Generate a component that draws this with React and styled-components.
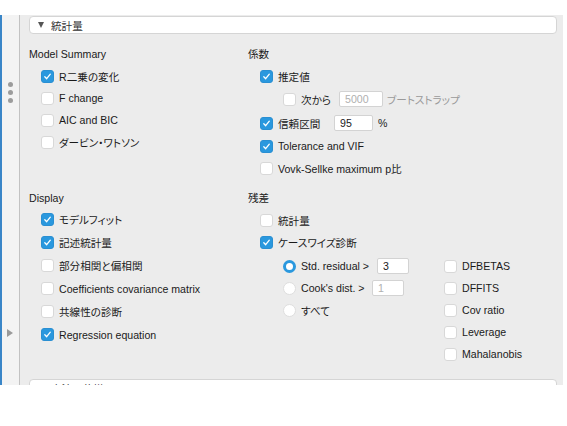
import React from "react";
import styled, { createGlobalStyle } from "styled-components";

const Global = createGlobalStyle`
  html, body { margin: 0; padding: 0; background: #ffffff; }
  body {
    font-family: "Liberation Sans", "Noto Sans CJK JP", sans-serif;
    font-size: 10.6px;
    color: #1a1a1a;
    font-feature-settings: "palt";
  }
  * { box-sizing: border-box; }
`;

const Frame = styled.div`
  display: flex;
  margin-top: 15px;
  width: 563px;
  height: 370px;
  overflow: hidden;
`;

const SideStrip = styled.div`
  width: 20px;
  flex: none;
  display: flex;
  flex-direction: column;
  align-items: center;
  padding-top: 67px;
  background: #f3f3f3;
  border-left: 2px solid #3a86c8;
  border-right: 1px solid #c2c2c2;
`;

const Dots = styled.div`
  display: flex;
  flex-direction: column;
  gap: 3px;
`;

const Dot = styled.span`
  width: 5px;
  height: 5px;
  border-radius: 50%;
  background: #9c9c9c;
`;

const SideArrow = styled.span`
  align-self: flex-start;
  margin-left: 5px;
  margin-top: 226px;
  width: 0;
  height: 0;
  border-top: 4px solid transparent;
  border-bottom: 4px solid transparent;
  border-left: 6px solid #9a9a9a;
`;

const Panel = styled.div`
  flex: 1;
  display: flex;
  flex-direction: column;
  background: #ececec;
  padding: 1px 6px 0 9px;
`;

const SectionHeader = styled.div`
  flex: none;
  height: 18px;
  display: flex;
  align-items: center;
  gap: 7px;
  padding-left: 8px;
  background: #ffffff;
  border: 1px solid #d5d5d5;
  border-radius: 4px;
  color: #333;
  margin-top: ${(p) => p.$top || 0}px;
`;

const Caret = styled.span`
  width: 0;
  height: 0;
  ${(p) =>
    p.$open
      ? `border-left: 3.5px solid transparent;
         border-right: 3.5px solid transparent;
         border-top: 6px solid #555;`
      : `border-top: 3.5px solid transparent;
         border-bottom: 3.5px solid transparent;
         border-left: 6px solid #555;`}
`;

const Columns = styled.div`
  display: grid;
  grid-template-columns: 219px 1fr;
  row-gap: 11px;
  margin-top: 12px;
`;

const Group = styled.section`
  display: flex;
  flex-direction: column;
`;

const Heading = styled.div`
  height: 16px;
  line-height: 16px;
  color: #1a1a1a;
`;

const List = styled.div`
  display: flex;
  flex-direction: column;
  padding-left: 12px;
  padding-top: ${(p) => p.$top ?? 3}px;
`;

const Row = styled.div`
  display: flex;
  align-items: center;
  height: ${(p) => p.$h || 22}px;
  padding-left: ${(p) => p.$indent || 0}px;
  white-space: nowrap;
`;

const Box = styled.span`
  flex: none;
  width: 13px;
  height: 13px;
  border-radius: 3px;
  display: inline-flex;
  align-items: center;
  justify-content: center;
  background: ${(p) => (p.$checked ? "#2a98de" : "#ffffff")};
  border: 1px solid ${(p) => (p.$checked ? "#2a8fd2" : "#d8d8d8")};
`;

const RadioDot = styled.span`
  flex: none;
  width: 13px;
  height: 13px;
  border-radius: 50%;
  background: #ffffff;
  border: ${(p) => (p.$checked ? "3px solid #2a98de" : "1px solid #dedede")};
`;

const Label = styled.span`
  margin-left: 5px;
  color: ${(p) => (p.$muted ? "#9a9a9a" : "#1a1a1a")};
  ${(p) => (p.$w ? `width: ${p.$w}px; flex: none;` : "")}
`;

const NumField = styled.input`
  flex: none;
  width: ${(p) => p.$w}px;
  height: 16px;
  padding: 0 0 0 5px;
  border: 1px solid #d3d3d3;
  border-radius: 2px;
  background: #ffffff;
  font: inherit;
  color: ${(p) => (p.disabled ? "#b0b0b0" : "#1a1a1a")};
  outline: none;
`;

const Suffix = styled.span`
  margin-left: ${(p) => p.$gap || 4}px;
  color: ${(p) => (p.$muted ? "#9a9a9a" : "#1a1a1a")};
`;

const SubGrid = styled.div`
  display: grid;
  grid-template-columns: 161px auto;
  align-items: start;
  margin-left: 23px;
  margin-top: 2px;
`;

const SubCol = styled.div`
  display: flex;
  flex-direction: column;
`;

function Check({ checked }) {
  return (
    <Box $checked={checked}>
      {checked && (
        <svg width="9" height="9" viewBox="0 0 9 9">
          <path
            d="M1.8 4.8 L3.7 6.7 L7.3 2.2"
            fill="none"
            stroke="#ffffff"
            strokeWidth="1.3"
            strokeLinecap="round"
            strokeLinejoin="round"
          />
        </svg>
      )}
    </Box>
  );
}

function CheckRow({ checked, children, h, indent }) {
  return (
    <Row $h={h} $indent={indent}>
      <Check checked={checked} />
      <Label>{children}</Label>
    </Row>
  );
}

export default function App() {
  return (
    <>
      <Global />
      <Frame>
        <SideStrip>
          <Dots>
            <Dot />
            <Dot />
            <Dot />
          </Dots>
          <SideArrow />
        </SideStrip>
        <Panel>
          <SectionHeader>
            <Caret $open />
            <span>統計量</span>
          </SectionHeader>
          <Columns>
            <Group>
              <Heading>Model Summary</Heading>
              <List>
                <CheckRow checked>R二乗の変化</CheckRow>
                <CheckRow>F change</CheckRow>
                <CheckRow>AIC and BIC</CheckRow>
                <CheckRow>ダービン・ワトソン</CheckRow>
              </List>
            </Group>
            <Group>
              <Heading>係数</Heading>
              <List>
                <CheckRow checked>推定値</CheckRow>
                <Row $h={24} $indent={23}>
                  <Check />
                  <Label $w={38}>次から</Label>
                  <NumField $w={44} defaultValue="5000" disabled />
                  <Suffix $muted>ブートストラップ</Suffix>
                </Row>
                <Row $h={24}>
                  <Check checked />
                  <Label $w={56}>信頼区間</Label>
                  <NumField $w={39} defaultValue="95" readOnly />
                  <Suffix $gap={5}>%</Suffix>
                </Row>
                <CheckRow checked>Tolerance and VIF</CheckRow>
                <CheckRow>Vovk-Sellke maximum p比</CheckRow>
              </List>
            </Group>
            <Group>
              <Heading>Display</Heading>
              <List $top={2}>
                <CheckRow checked h={23}>モデルフィット</CheckRow>
                <CheckRow checked h={23}>記述統計量</CheckRow>
                <CheckRow h={23}>部分相関と偏相関</CheckRow>
                <CheckRow h={23}>Coefficients covariance matrix</CheckRow>
                <CheckRow h={23}>共線性の診断</CheckRow>
                <CheckRow checked h={23}>Regression equation</CheckRow>
              </List>
            </Group>
            <Group>
              <Heading>残差</Heading>
              <List>
                <CheckRow>統計量</CheckRow>
                <CheckRow checked>ケースワイズ診断</CheckRow>
                <SubGrid>
                  <SubCol>
                    <Row>
                      <RadioDot $checked />
                      <Label $w={76}>Std. residual &gt;</Label>
                      <NumField $w={32} defaultValue="3" readOnly />
                    </Row>
                    <Row>
                      <RadioDot />
                      <Label $w={71}>Cook's dist. &gt;</Label>
                      <NumField $w={32} defaultValue="1" disabled />
                    </Row>
                    <Row>
                      <RadioDot />
                      <Label>すべて</Label>
                    </Row>
                  </SubCol>
                  <SubCol>
                    <CheckRow>DFBETAS</CheckRow>
                    <CheckRow>DFFITS</CheckRow>
                    <CheckRow>Cov ratio</CheckRow>
                    <CheckRow>Leverage</CheckRow>
                    <CheckRow>Mahalanobis</CheckRow>
                  </SubCol>
                </SubGrid>
              </List>
            </Group>
          </Columns>
          <SectionHeader $top={14}>
            <Caret />
            <span>方法の仕様</span>
          </SectionHeader>
        </Panel>
      </Frame>
    </>
  );
}
